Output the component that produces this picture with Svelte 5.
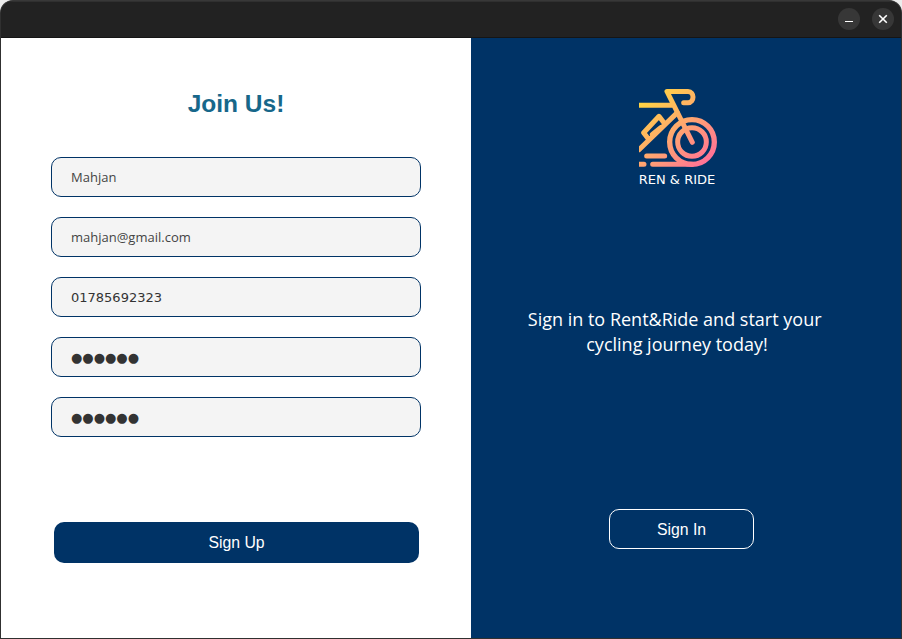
<script>
  let fields = $state([
    { label: 'Name', value: 'Mahjan', kind: 'name' },
    { label: 'Email', value: 'mahjan@gmail.com', kind: 'email' },
    { label: 'Phone', value: '01785692323', kind: 'phone' },
    { label: 'Password', value: '●●●●●●', kind: 'secret' },
    { label: 'Confirm password', value: '●●●●●●', kind: 'secret' }
  ]);
</script>

<div class="desktop">
  <div class="window">
    <header>
      <button class="control" aria-label="Minimize">
        <svg width="22" height="22" viewBox="0 0 22 22"><path d="M7 13.5h8" stroke="#fff" /></svg>
      </button>
      <button class="control" aria-label="Close">
        <svg width="22" height="22" viewBox="0 0 22 22"><path d="M7.2 7.2l7.6 7.6M14.8 7.2l-7.6 7.6" stroke="#fff" stroke-width="1.6" /></svg>
      </button>
    </header>
    <main>
      <section class="join">
        <h1>Join Us!</h1>
        <form>
          {#each fields as field}
            <input class={field.kind} aria-label={field.label} bind:value={field.value} />
          {/each}
          <button type="button" class="signup">Sign Up</button>
        </form>
      </section>
      <section class="welcome">
        <svg class="logo" width="78" height="78" viewBox="33 27 234 234" fill="none" stroke="url(#warm)" stroke-width="15" stroke-linecap="round" stroke-linejoin="round">
          <defs>
            <linearGradient id="warm" gradientUnits="userSpaceOnUse" x1="50" y1="40" x2="240" y2="250">
              <stop offset="0" stop-color="#ffd83f" />
              <stop offset=".5" stop-color="#ffa96d" />
              <stop offset="1" stop-color="#ff7098" />
            </linearGradient>
          </defs>
          <path d="M30 76H134M193 187L117 34.5H180C200 34.5 200 68 180 68H167" />
          <path d="M33 209L148 98M62 178L47 158L93 109L109 130M73 163L98 143" />
          <circle cx="192" cy="186" r="67" stroke-width="16" />
          <circle cx="192" cy="186" r="43" />
          <path d="M192 253H74M30 253H48M56 228H110" />
        </svg>
        <span class="brand">REN &amp; RIDE</span>
        <p>Sign in to Rent&amp;Ride and start your&nbsp;<br />cycling journey today!</p>
        <button class="signin">Sign In</button>
      </section>
    </main>
  </div>
</div>

<style>
  :global(body) { margin: 0; overflow: hidden; }
  * { box-sizing: border-box; }
  .desktop { width: 902px; height: 639px; background: #ececec; }
  .window { width: 902px; height: 639px; border: 1px solid #303030; border-top-color: #383838; border-radius: 13px 13px 0 0; overflow: hidden; display: flex; flex-direction: column; background: #222; }
  header { height: 37px; flex: none; background: #222; border-top: 1px solid #303030; border-bottom: 1px solid #151515; display: flex; justify-content: flex-end; align-items: flex-start; gap: 12px; padding: 6px 7px 0 0; }
  button { font-family: "Liberation Sans", Arial, sans-serif; font-size: 16px; padding: 0; }
  .control { width: 22px; height: 22px; border: 0; border-radius: 50%; background: #373737; }
  .control svg { display: block; fill: none; }
  main { flex: 1; display: flex; }
  .join { width: 470px; background: #fff; padding: 50px 50px 0; }
  h1 { margin: 0; height: 69px; text-align: center; font: bold 24.5px/31px "Liberation Sans", Arial, sans-serif; color: #17678a; }
  form { display: flex; flex-direction: column; gap: 20px; }
  input { width: 370px; height: 40px; border: 1px solid #003366; border-radius: 10px; background: #f4f4f4; color: #444; padding: 0 19px; font: 13px "Open Sans", sans-serif; outline: none; }
  .phone { font-family: "DejaVu Sans", sans-serif; color: #333; }
  .secret { font: 13px "DejaVu Sans", sans-serif; color: #333; }
  .signup { width: 365px; height: 41px; margin: 65px 0 0 3px; border: 0; border-radius: 10px; background: #003366; color: #fff; }
  .welcome { flex: 1; background: #003366; color: #fff; display: flex; flex-direction: column; align-items: flex-start; padding-top: 51px; }
  .logo { margin-left: 168px; flex: none; }
  .brand { width: 80px; margin-left: 166px; margin-top: 5px; height: 16px; white-space: nowrap; text-align: center; font: 13px/16px "DejaVu Sans", sans-serif; }
  p { width: 412px; margin: 119px 0 0; text-align: center; font: 18px/25px "Open Sans", sans-serif; }
  .signin { width: 145px; height: 40px; margin: 152px 0 0 138px; padding-top: 2px; border: 1px solid #fff; border-radius: 10px; background: transparent; color: #fff; }
  .signup, .signin { font-size: 15.8px; }
</style>
